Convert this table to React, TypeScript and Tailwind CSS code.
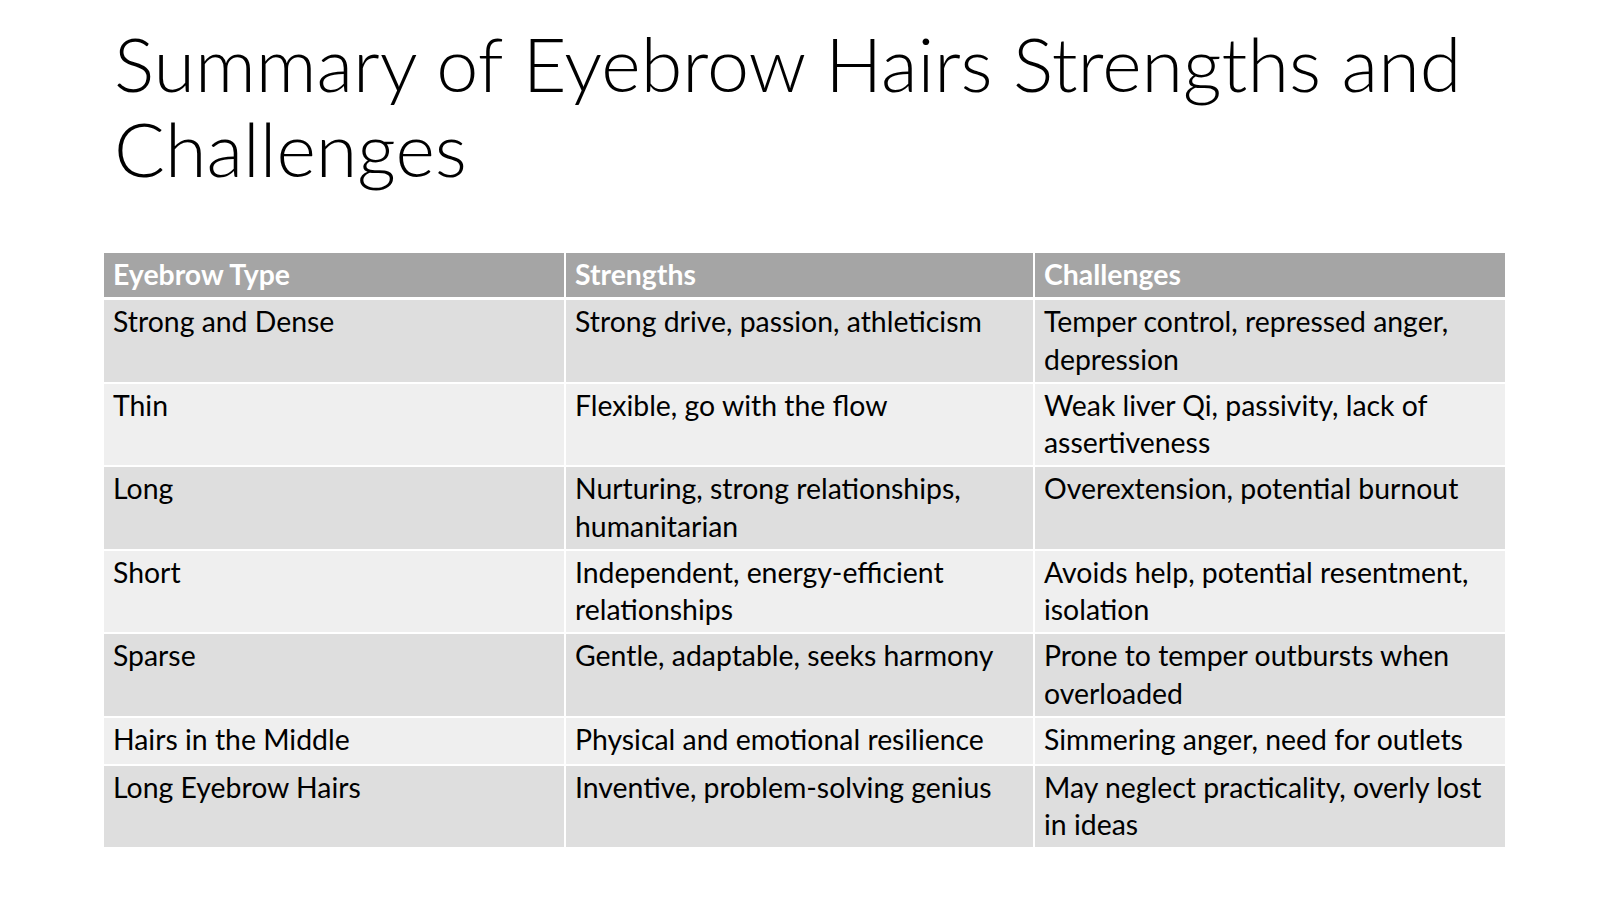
import React from "react";

const rows: { type: string; strengths: string[]; challenges: string[] }[] = [
  { type: "Strong and Dense", strengths: ["Strong drive, passion, athleticism"], challenges: ["Temper control, repressed anger,", "depression"] },
  { type: "Thin", strengths: ["Flexible, go with the flow"], challenges: ["Weak liver Qi, passivity, lack of", "assertiveness"] },
  { type: "Long", strengths: ["Nurturing, strong relationships,", "humanitarian"], challenges: ["Overextension, potential burnout"] },
  { type: "Short", strengths: ["Independent, energy-efficient", "relationships"], challenges: ["Avoids help, potential resentment,", "isolation"] },
  { type: "Sparse", strengths: ["Gentle, adaptable, seeks harmony"], challenges: ["Prone to temper outbursts when", "overloaded"] },
  { type: "Hairs in the Middle", strengths: ["Physical and emotional resilience"], challenges: ["Simmering anger, need for outlets"] },
  { type: "Long Eyebrow Hairs", strengths: ["Inventive, problem-solving genius"], challenges: ["May neglect practicality, overly lost", "in ideas"] },
];

const Cell = ({ lines, className }: { lines: string[]; className: string }) => (
  <div className={`pl-[9px] pr-[8px] pt-[3px] ${className}`}>
    {lines.map((l, i) => (
      <div key={i} className="whitespace-nowrap">
        {l}
      </div>
    ))}
  </div>
);

export default function App() {
  return (
    <div
      className="w-[1614px] h-[900px] bg-white overflow-hidden text-black"
      style={{ fontFamily: "Lato, 'Open Sans', sans-serif" }}
    >
      <h1 className="pl-[114px] pt-[20px] text-[75.5px] leading-[85px] font-light">
        Summary of Eyebrow Hairs Strengths and
        <br />
        Challenges
      </h1>

      <div className="ml-[104px] mt-[63px] w-[1401px] flex flex-col gap-[2px] text-[28.4px] leading-[37.5px]">
        <div className="grid grid-cols-[460px_467px_470px] gap-x-[2px] mb-[1px] h-[44px] font-bold text-white">
          <Cell lines={["Eyebrow Type"]} className="bg-[#a5a5a5]" />
          <Cell lines={["Strengths"]} className="bg-[#a5a5a5]" />
          <Cell lines={["Challenges"]} className="bg-[#a5a5a5]" />
        </div>
        {rows.map((r, i) => {
          const bg = i % 2 === 0 ? "bg-[#dedede]" : "bg-[#efefef]";
          return (
            <div key={r.type} className="grid grid-cols-[460px_467px_470px] gap-x-[2px] min-h-[46px]">
              <Cell lines={[r.type]} className={`${bg} pb-[3.5px]`} />
              <Cell lines={r.strengths} className={`${bg} pb-[3.5px]`} />
              <Cell lines={r.challenges} className={`${bg} pb-[3.5px]`} />
            </div>
          );
        })}
      </div>
    </div>
  );
}
